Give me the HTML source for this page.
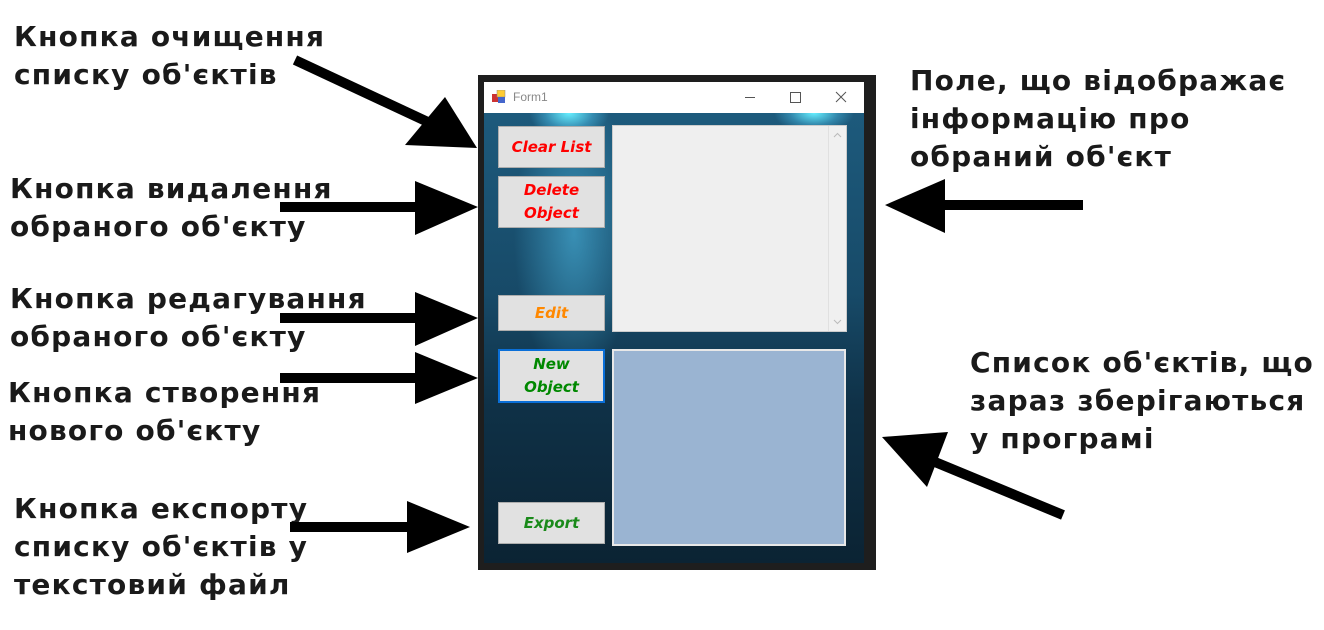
<!DOCTYPE html>
<html><head><meta charset="utf-8"><style>
body{margin:0;width:1324px;height:630px;background:#fff;position:relative;overflow:hidden;font-family:"DejaVu Sans","Liberation Sans",sans-serif}
.t{position:absolute;font-weight:bold;font-size:28px;letter-spacing:1.2px;color:#1a1a1a;line-height:38px;white-space:nowrap}
.win{position:absolute;left:478px;top:75px;width:398px;height:495px;background:#1e1e1e}
.title{position:absolute;left:6px;top:7px;width:380px;height:31px;background:#fff;font-family:"Liberation Sans",sans-serif;font-size:12px;color:#888}
.bg{position:absolute;left:6px;top:38px;width:380px;height:450px;background:
radial-gradient(ellipse 40px 25px at 85px 0px,#6ef 0%,rgba(80,200,240,.4) 60%,transparent 100%),
radial-gradient(ellipse 40px 20px at 330px 0px,#6ef 0%,rgba(80,200,240,.4) 60%,transparent 100%),
radial-gradient(ellipse 60px 150px at 90px 120px,rgba(70,170,210,.7),transparent),
linear-gradient(#1d5a7c 0%,#174a68 40%,#0f3147 65%,#0b2333 100%)}
.btn{position:absolute;left:14px;width:107px;background:#e1e1e1;border:1px solid #adadad;box-sizing:border-box;font-family:"Comic Sans MS","DejaVu Sans",sans-serif;font-style:italic;font-weight:bold;font-size:15px;text-align:center;display:flex;align-items:center;justify-content:center;line-height:23px}
</style></head><body>
<div class="t" style="left:14px;top:18px">Кнопка очищення<br>списку об'єктів</div>
<div class="t" style="left:10px;top:170px">Кнопка видалення<br>обраного об'єкту</div>
<div class="t" style="left:10px;top:280px">Кнопка редагування<br>обраного об'єкту</div>
<div class="t" style="left:8px;top:374px">Кнопка створення<br>нового об'єкту</div>
<div class="t" style="left:14px;top:490px">Кнопка експорту<br>списку об'єктів у<br>текстовий файл</div>
<div class="t" style="left:910px;top:62px">Поле, що відображає<br>інформацію про<br>обраний об'єкт</div>
<div class="t" style="left:970px;top:344px">Список об'єктів, що<br>зараз зберігаються<br>у програмі</div>

<div class="win">
 <div class="title">
  <svg style="position:absolute;left:8px;top:8px" width="14" height="14"><rect x="0" y="4" width="6" height="8" fill="#c33"/><rect x="5" y="0" width="8" height="7" fill="#fc3" stroke="#888" stroke-width=".5"/><rect x="6" y="7" width="7" height="6" fill="#46c"/></svg>
  <span style="position:absolute;left:29px;top:8px">Form1</span>
  <div style="position:absolute;left:261px;top:15px;width:10px;height:1px;background:#555"></div>
  <div style="position:absolute;left:306px;top:10px;width:9px;height:9px;border:1px solid #555"></div>
  <svg style="position:absolute;left:351px;top:9px" width="12" height="12"><path d="M1 1L11 11M11 1L1 11" stroke="#555" stroke-width="1"/></svg>
 </div>
 <div class="bg">
  <div class="btn" style="top:13px;height:42px;color:#f00">Clear List</div>
  <div class="btn" style="top:63px;height:52px;color:#f00">Delete<br>Object</div>
  <div class="btn" style="top:182px;height:36px;color:#f80">Edit</div>
  <div class="btn" style="top:236px;height:54px;color:#080;border:2px solid #0a6fd8">New<br>Object</div>
  <div class="btn" style="top:389px;height:42px;color:#1a8a1a">Export</div>
  <div style="position:absolute;left:128px;top:12px;width:235px;height:207px;background:#efefef;border:1px solid #ccc;box-sizing:border-box">
   <div style="position:absolute;right:0;top:0;width:17px;height:100%;border-left:1px solid #e0e0e0;background:#f0f0f0"></div>
   <svg style="position:absolute;right:4px;top:6px" width="9" height="6"><path d="M1 5L4.5 1.5L8 5" stroke="#bbb" fill="none"/></svg>
   <svg style="position:absolute;right:4px;bottom:6px" width="9" height="6"><path d="M1 1L4.5 4.5L8 1" stroke="#bbb" fill="none"/></svg>
  </div>
  <div style="position:absolute;left:128px;top:236px;width:234px;height:197px;background:#9ab4d2;border:2px solid #e8e8e8;box-sizing:border-box"></div>
 </div>
</div>

<svg style="position:absolute;left:0;top:0" width="1324" height="630">
 <g fill="#000" stroke="#000">
  <line x1="295" y1="60" x2="430" y2="123" stroke-width="10"/>
  <polygon points="477,148 405,145 445,97" stroke="none"/>
  <line x1="280" y1="207" x2="420" y2="207" stroke-width="10"/>
  <polygon points="478,207 415,181 415,235" stroke="none"/>
  <line x1="280" y1="318" x2="420" y2="318" stroke-width="10"/>
  <polygon points="478,318 415,292 415,346" stroke="none"/>
  <line x1="280" y1="378" x2="420" y2="378" stroke-width="10"/>
  <polygon points="478,378 415,352 415,404" stroke="none"/>
  <line x1="290" y1="527" x2="412" y2="527" stroke-width="10"/>
  <polygon points="470,527 407,501 407,553" stroke="none"/>
  <line x1="1083" y1="205" x2="940" y2="205" stroke-width="10"/>
  <polygon points="885,205 945,179 945,233" stroke="none"/>
  <line x1="1063" y1="515" x2="935" y2="462" stroke-width="10"/>
  <polygon points="882,437 948,432 927,487" stroke="none"/>
 </g>
</svg>
</body></html>
